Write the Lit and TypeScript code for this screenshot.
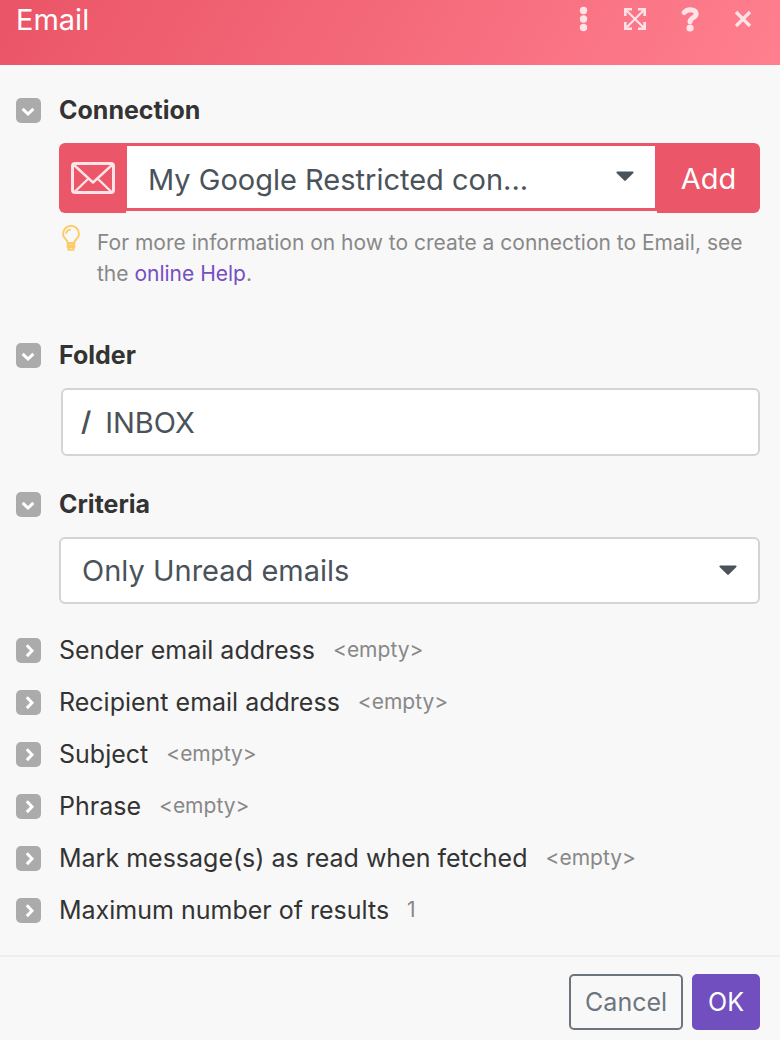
import { LitElement, html, css, svg } from "lit";
import { customElement, property, state } from "lit/decorators.js";

interface Field {
  label: string;
  value: string;
}

const FIELDS: Field[] = [
  { label: "Sender email address", value: "<empty>" },
  { label: "Recipient email address", value: "<empty>" },
  { label: "Subject", value: "<empty>" },
  { label: "Phrase", value: "<empty>" },
  { label: "Mark message(s) as read when fetched", value: "<empty>" },
  { label: "Maximum number of results", value: "1" },
];

@customElement("toggle-box")
class ToggleBox extends LitElement {
  @property({ type: Boolean }) open = false;
  @property() name = "";

  static styles = css`
    :host {
      display: block;
      width: 25px;
      height: 25px;
    }
    .box {
      display: block;
      width: 25px;
      height: 25px;
      margin: 0;
      padding: 0;
      border: 0;
      border-radius: 5px;
      background: #ababab;
      cursor: pointer;
    }
    .glyph {
      display: block;
    }
  `;

  render() {
    return html`<button
      class="box"
      type="button"
      aria-label="Toggle ${this.name}"
      aria-expanded=${this.open ? "true" : "false"}
    >
      <svg class="glyph" width="25" height="25" viewBox="0 0 25 25" fill="none" stroke="#fff" stroke-width="3">
        ${this.open
          ? svg`<path d="M6.600 10.800l5.400 5.200L17.400 10.800" />`
          : svg`<path d="M10.800 7.300l5.200 5.400-5.200 5.400" />`}
      </svg>
    </button>`;
  }
}

@customElement("app-root")
class AppRoot extends LitElement {
  @state() folder = "INBOX";

  static styles = css`
    :host {
      display: flex;
      flex-direction: column;
      min-height: 100vh;
      background: #f8f8f8;
      color: #333;
      font-family: Inter, "Liberation Sans", sans-serif;
      font-size: 25px;
    }
    * {
      box-sizing: border-box;
    }
    button,
    input,
    select {
      margin: 0;
      font-family: inherit;
    }
    svg {
      display: block;
    }
    .header {
      display: flex;
      justify-content: space-between;
      height: 65px;
      padding: 0 20px 0 16px;
      background: linear-gradient(120deg, #ea5567, #ff7f8f);
      color: #fff;
    }
    .title {
      margin: 0;
      font-size: 29px;
      font-weight: 400;
      line-height: 40px;
    }
    .tools {
      display: flex;
      gap: 18px;
      height: 38px;
      align-items: center;
    }
    .tool {
      padding: 0;
      border: 0;
      background: none;
      color: #ffe3e7;
      cursor: pointer;
    }
    .body {
      display: flex;
      flex-direction: column;
      padding: 32px 20px 19px 16px;
    }
    .section {
      display: grid;
      grid-template-columns: 25px 1fr;
      column-gap: 18px;
      row-gap: 20px;
    }
    .section > toggle-box {
      align-self: end;
    }
    .section + .section {
      margin-top: 35px;
    }
    .section.noted + .section {
      margin-top: 53px;
    }
    .label {
      font-weight: 700;
      line-height: 26px;
    }
    .control {
      grid-column: 2;
      min-width: 0;
    }
    .group {
      display: flex;
      align-items: flex-start;
    }
    .brand {
      display: grid;
      place-items: center;
      width: 67px;
      height: 70px;
      border-radius: 6px 0 0 6px;
      background: #eb5768;
    }
    .pick {
      display: grid;
      flex: 1;
      min-width: 0;
      align-items: center;
    }
    .select {
      grid-area: 1 / 1;
      width: 100%;
      height: 67px;
      padding: 0 64px 0 21px;
      appearance: none;
      border: 2px solid #d4d4d4;
      border-radius: 6px;
      background: #fff;
      color: #4a525a;
      font-size: 29px;
      text-overflow: ellipsis;
    }
    .pick.joined .select {
      height: 68px;
      padding-top: 4px;
      border: 3px solid #eb5768;
      border-left-width: 1px;
      border-right-width: 2px;
      border-radius: 0;
    }
    .caret {
      grid-area: 1 / 1;
      justify-self: end;
      margin-right: 23px;
      pointer-events: none;
    }
    .add {
      width: 103px;
      height: 70px;
      padding: 0;
      border: 0;
      border-radius: 0 6px 6px 0;
      background: #eb5768;
      color: #fff;
      font-size: 29px;
    }
    .note {
      display: grid;
      grid-template-columns: 24px 1fr;
      column-gap: 14px;
      padding-top: 14px;
      color: #888;
      font-size: 21px;
      line-height: 31px;
    }
    .note p {
      margin: 0;
    }
    .note svg {
      margin-top: -2px;
    }
    .link {
      color: #764fc1;
      text-decoration: none;
    }
    .path {
      display: flex;
      align-items: center;
      height: 68px;
      margin-left: 2px;
      padding-left: 18px;
      gap: 14px;
      border: 2px solid #d4d4d4;
      border-radius: 6px;
      background: #fff;
      color: #4a525a;
      font-size: 29px;
    }
    .slash {
      padding-bottom: 2px;
      font-size: 27px;
      font-weight: 600;
    }
    .input {
      flex: 1;
      min-width: 0;
      height: 60px;
      padding: 0;
      border: 0;
      outline: 0;
      background: none;
      color: inherit;
      font-size: 29px;
    }
    .fields {
      margin: 20px 0 0;
      padding: 0;
      list-style: none;
    }
    .field {
      display: flex;
      align-items: center;
      height: 52px;
    }
    .name {
      margin: 0 18px;
      padding-bottom: 1px;
    }
    .value {
      padding-bottom: 2px;
      color: #888;
      font-size: 21px;
    }
    .footer {
      display: flex;
      flex: 1;
      align-items: flex-start;
      justify-content: flex-end;
      gap: 9px;
      padding: 17px 20px 10px;
      border-top: 2px solid #eee;
    }
    .button {
      height: 56px;
      padding: 0 14px;
      border: 2px solid #6c757d;
      border-radius: 5px;
      background: #f8f8f8;
      color: #6c757d;
      font-size: 25px;
    }
    .button.primary {
      border-color: #724fbf;
      background: #724fbf;
      color: #fff;
    }
  `;

  private caret() {
    return html`<svg class="caret" width="18" height="12" viewBox="0 0 18 12">
      <path d="M1 .5h16q1 .6.4 1.5L9.800 9.600q-.8.8-1.600 0L.6 2Q0 1 1 .5z" fill="#4a525a" />
    </svg>`;
  }

  render() {
    return html`
      <header class="header">
        <h1 class="title">Email</h1>
        <div class="tools">
          <button class="tool" type="button" aria-label="More">
            <svg width="34" height="34" viewBox="0 0 34 34" fill="currentColor">
              <circle cx="17.500" cy="8.500" r="3.700" />
              <circle cx="17.500" cy="17" r="3.700" />
              <circle cx="17.500" cy="25.500" r="3.700" />
            </svg>
          </button>
          <button class="tool" type="button" aria-label="Expand">
            <svg width="34" height="34" viewBox="0 0 34 34" fill="none" stroke="currentColor" stroke-width="2.600">
              <path d="M7.500 7.500l19 19M26.500 7.500l-19 19" stroke-width="2.100" />
              <path d="M7.300 14V7.300H14M20 7.300h6.700V14M26.700 20v6.700H20M14 26.700H7.300V20" />
            </svg>
          </button>
          <button class="tool" type="button" aria-label="Help">
            <svg width="38" height="34" viewBox="0 0 38 34" fill="none" stroke="currentColor">
              <path d="M14.200 10.600c1.500-2 3.400-2.800 6-2.800 3.600 0 6 1.500 6 4.200 0 3.900-6.200 3.300-6.200 7.800" stroke-width="5" stroke-linecap="round" />
              <circle cx="20" cy="26" r="3.600" fill="currentColor" stroke="none" />
            </svg>
          </button>
          <button class="tool" type="button" aria-label="Close">
            <svg width="34" height="34" viewBox="0 0 34 34" fill="none" stroke="currentColor" stroke-width="3.200">
              <path d="M10 10l14 14M24 10L10 24" />
            </svg>
          </button>
        </div>
      </header>

      <main class="body">
        <section class="section noted">
          <toggle-box open name="Connection"></toggle-box>
          <label class="label" for="connection">Connection</label>
          <div class="control">
            <div class="group">
              <span class="brand">
                <svg width="44" height="32" viewBox="0 0 44 32" fill="none" stroke="#ffe3e7" stroke-width="3" stroke-linejoin="round">
                  <rect x="1.500" y="1.500" width="41" height="29" rx="2.500" />
                  <path d="M3 3l19 17.500L41 3M4 29.500L17.500 16.500M40 29.500L26.500 16.500" stroke-width="2.400" />
                </svg>
              </span>
              <div class="pick joined">
                <select class="select" id="connection">
                  <option>My Google Restricted con...</option>
                </select>
                ${this.caret()}
              </div>
              <button class="add" type="button">Add</button>
            </div>
            <div class="note">
              <svg width="24" height="28" viewBox="0 0 24 28" fill="none" stroke="#fccb66" stroke-width="1.900">
                <path d="M8.700 18C8.700 14 4 13.500 4 8.900a8 8 0 0 1 16 0c0 4.600-4.700 5.100-4.700 9.100z" />
                <path d="M8.700 18v4.200h6.600V18M9.500 22.500v2.300h5v-2.300M8.700 20.200h6.600" />
                <path d="M7.200 9c0-2.700 1.800-4.400 4.600-4.700" stroke-width="1.700" />
              </svg>
              <p>
                For more information on how to create a connection to Email, see the
                <a class="link" href="#help">online Help</a>.
              </p>
            </div>
          </div>
        </section>

        <section class="section">
          <toggle-box open name="Folder"></toggle-box>
          <label class="label" for="folder">Folder</label>
          <div class="control path">
            <span class="slash">/</span>
            <input class="input" id="folder" type="text" .value=${this.folder} />
          </div>
        </section>

        <section class="section">
          <toggle-box open name="Criteria"></toggle-box>
          <label class="label" for="criteria">Criteria</label>
          <div class="control pick">
            <select class="select" id="criteria">
              <option>Only Unread emails</option>
            </select>
            ${this.caret()}
          </div>
        </section>

        <ul class="fields">
          ${FIELDS.map(
            (f) => html`<li class="field">
              <toggle-box name=${f.label}></toggle-box>
              <span class="name">${f.label}</span>
              <span class="value">${f.value}</span>
            </li>`
          )}
        </ul>
      </main>

      <footer class="footer">
        <button class="button" type="button">Cancel</button>
        <button class="button primary" type="button">OK</button>
      </footer>
    `;
  }
}
